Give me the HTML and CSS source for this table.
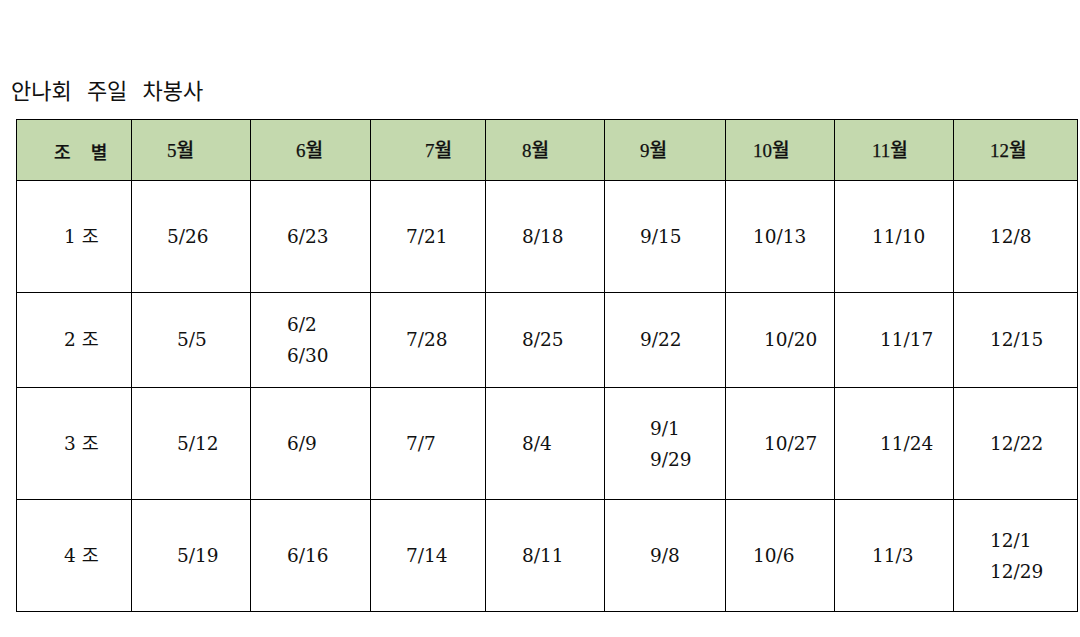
FILE: index.html
```html
<!DOCTYPE html>
<html lang="ko">
<head>
<meta charset="utf-8">
<link rel="stylesheet" href="styles.css">
</head>
<body>
<div class="page">
  <h1 class="title">안나회 주일 차봉사</h1>
  <table class="sched">
    <colgroup>
      <col class="c0"><col class="c1"><col class="c2"><col class="c3"><col class="c4"><col class="c5"><col class="c6"><col class="c7"><col class="c8">
    </colgroup>
    <thead>
      <tr>
        <th class="p0h">조&nbsp;&nbsp;&nbsp;&nbsp;별</th>
        <th class="p1">5월</th>
        <th class="p2h">6월</th>
        <th class="p3h">7월</th>
        <th class="p4">8월</th>
        <th class="p5">9월</th>
        <th class="p6">10월</th>
        <th class="p7">11월</th>
        <th class="p8">12월</th>
      </tr>
    </thead>
    <tbody>
      <tr class="r1">
        <td class="p0">1 조</td>
        <td class="p1">5/26</td>
        <td class="p2">6/23</td>
        <td class="p3">7/21</td>
        <td class="p4">8/18</td>
        <td class="p5">9/15</td>
        <td class="p6">10/13</td>
        <td class="p7">11/10</td>
        <td class="p8">12/8</td>
      </tr>
      <tr class="r2">
        <td class="p0">2 조</td>
        <td class="p1 ind">5/5</td>
        <td class="p2"><div class="two">6/2<br>6/30</div></td>
        <td class="p3">7/28</td>
        <td class="p4">8/25</td>
        <td class="p5">9/22</td>
        <td class="p6 ind">10/20</td>
        <td class="p7 ind2">11/17</td>
        <td class="p8">12/15</td>
      </tr>
      <tr class="r3">
        <td class="p0">3 조</td>
        <td class="p1 ind">5/12</td>
        <td class="p2">6/9</td>
        <td class="p3">7/7</td>
        <td class="p4">8/4</td>
        <td class="p5 ind"><div class="two">9/1<br>9/29</div></td>
        <td class="p6 ind">10/27</td>
        <td class="p7 ind2">11/24</td>
        <td class="p8">12/22</td>
      </tr>
      <tr class="r4">
        <td class="p0">4 조</td>
        <td class="p1 ind">5/19</td>
        <td class="p2">6/16</td>
        <td class="p3">7/14</td>
        <td class="p4">8/11</td>
        <td class="p5 ind">9/8</td>
        <td class="p6">10/6</td>
        <td class="p7">11/3</td>
        <td class="p8"><div class="two">12/1<br>12/29</div></td>
      </tr>
    </tbody>
  </table>
</div>
</body>
</html>
```

FILE: styles.css
```css
html, body {
  margin: 0;
  padding: 0;
  background: #ffffff;
}

.page {
  padding: 73px 0 0 16px;
  color: #111111;
}

.title {
  margin: 0 0 14px -5px;
  font-family: "Noto Sans CJK KR", sans-serif;
  font-weight: normal;
  font-size: 22px;
  line-height: 32px;
  word-spacing: 9px;
  color: #111111;
}

.sched {
  border-collapse: collapse;
  table-layout: fixed;
  width: 1062px;
}

.c0 { width: 115px; }
.c1 { width: 119px; }
.c2 { width: 120px; }
.c3 { width: 115px; }
.c4 { width: 119px; }
.c5 { width: 121px; }
.c6 { width: 109px; }
.c7 { width: 119px; }
.c8 { width: 124px; }

.sched th,
.sched td {
  border: 1px solid #000000;
  padding: 0;
  text-align: left;
  vertical-align: middle;
  white-space: nowrap;
}

.sched th {
  height: 59px;
  background: #c4d9ae;
  font-family: "Liberation Serif", "Noto Sans CJK KR", serif;
  font-weight: 500;
  font-size: 19px;
  line-height: 24px;
  padding-top: 1px;
  -webkit-text-stroke: 0.25px #111111;
}

.sched td {
  font-family: "DejaVu Serif", "Noto Sans CJK KR", serif;
  font-size: 18.5px;
  line-height: 24px;
}

.r1 td { height: 111px; }
.r2 td { height: 94px; }
.r3 td { height: 111px; }
.r4 td { height: 111px; }

.two {
  line-height: 31px;
}

.p0h { padding-left: 37px !important; font-family: "Noto Sans CJK KR", sans-serif !important; font-size: 18px !important; }
.p0 { padding-left: 47px !important; }
.p1 { padding-left: 35px !important; }
.p2 { padding-left: 36px !important; }
.p2h { padding-left: 45px !important; }
.p3 { padding-left: 35px !important; }
.p3h { padding-left: 54px !important; }
.p4 { padding-left: 36px !important; }
.p5 { padding-left: 35px !important; }
.p6 { padding-left: 27px !important; }
.p7 { padding-left: 37px !important; }
.p8 { padding-left: 36px !important; }

.p1.ind { padding-left: 45px !important; }
.p5.ind { padding-left: 45px !important; }
.p6.ind { padding-left: 38px !important; }
.p7.ind2 { padding-left: 45px !important; }
```
